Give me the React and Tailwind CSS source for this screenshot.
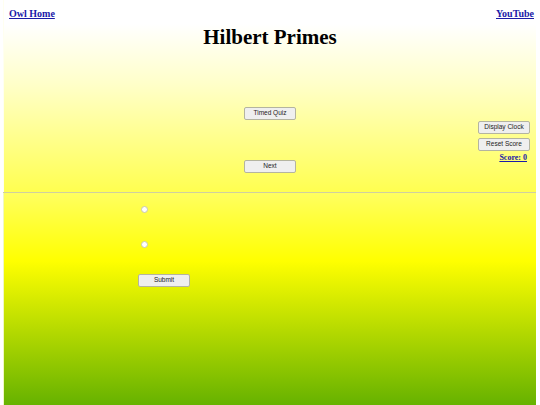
const Btn = ({ children }) => (
  <button className="w-[52px] h-[13px] bg-[#efefef] border border-[#b4b4a0] rounded-[2px] text-[6.5px] text-[#222] leading-none font-['Liberation_Sans',Arial,sans-serif]">
    {children}
  </button>
);

const Radio = () => (
  <span className="block w-[7px] h-[7px] rounded-full bg-white border border-[#c8c8b0]"></span>
);

export default function App() {
  return (
    <div className="w-[540px] h-[405px] overflow-hidden bg-white pl-[3px] pr-[4px] font-['Liberation_Serif','Times_New_Roman',serif]">
      <div className="h-[192px] bg-[linear-gradient(to_bottom,#ffffff_0px,#ffffff_24px,#ffffc8_85px,#ffff50_192px)] border-l border-[#fffff0]">
        <div className="flex justify-between pl-[5px] pr-[2px] pt-[8px]">
          <a href="#" className="text-[10px] font-bold text-[#1a1aa8] underline leading-[12px]">Owl Home</a>
          <a href="#" className="text-[10px] font-bold text-[#1a1aa8] underline leading-[12px]">YouTube</a>
        </div>
        <h1 className="text-center text-[21px] font-bold leading-[24px] text-black mt-[5px]">Hilbert Primes</h1>
        <div className="grid grid-cols-[1fr_auto_1fr]">
          <div></div>
          <div className="flex flex-col gap-[40px] pt-[58px]">
            <Btn>Timed Quiz</Btn>
            <Btn>Next</Btn>
          </div>
          <div className="flex flex-col items-end pt-[72px] pr-[6px]">
            <div className="flex flex-col items-center gap-[4px]">
              <Btn>Display Clock</Btn>
              <Btn>Reset Score</Btn>
              <a href="#" className="self-end mr-[3px] -mt-[2px] text-[8px] font-bold text-[#1a1aa8] underline leading-[10px]">Score: 0</a>
            </div>
          </div>
        </div>
      </div>
      <div className="h-[1px] bg-[#cfcfa0]"></div>
      <div className="h-[212px] bg-[linear-gradient(to_bottom,#ffff60_0px,#ffff00_68px,#66b200_212px)] border-l border-[#f0f8c0] pl-[134px] pt-[13px]">
        <div className="flex flex-col gap-[28px] pl-[3px]">
          <Radio />
          <Radio />
        </div>
        <div className="mt-[17px]">
          <Btn>Submit</Btn>
        </div>
      </div>
    </div>
  );
}
